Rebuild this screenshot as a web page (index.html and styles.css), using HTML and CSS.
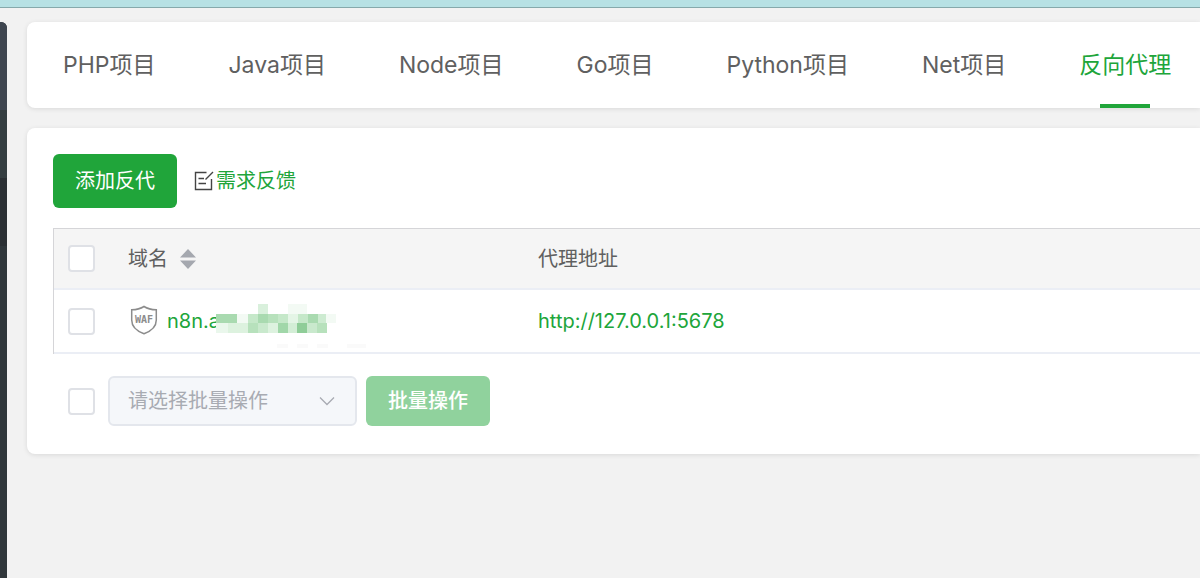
FILE: index.html
```
<!DOCTYPE html>
<html lang="zh-CN">
<head>
  <meta charset="utf-8">
  <meta name="viewport" content="width=device-width">
  <title>反向代理</title>
  <link rel="stylesheet" href="styles.css">
</head>
<body>
  <div class="topbar"></div>
  <div class="layout">
    <aside class="sidebar">
      <div class="side-logo"></div>
      <div class="side-item"></div>
      <div class="side-item active"></div>
    </aside>
    <main class="main">
      <nav class="card tabs">
        <a href="#php">PHP项目</a>
        <a href="#java">Java项目</a>
        <a href="#node">Node项目</a>
        <a href="#go">Go项目</a>
        <a href="#python">Python项目</a>
        <a href="#net">Net项目</a>
        <a href="#proxy" class="active">反向代理</a>
      </nav>

      <section class="card panel">
        <div class="toolbar">
          <button type="button" class="btn btn-add">添加反代</button>
          <a href="#feedback" class="feedback">
            <svg width="20" height="20" viewBox="0 0 20 20" fill="none" stroke="#444" stroke-width="1.4">
              <path d="M12.5 1.5H1.5V18.5H17.5V8M4.5 7.5H10M4.5 12.5H12M11.5 8.5L19 1"/>
            </svg>
            <span>需求反馈</span>
          </a>
        </div>

        <table class="sites">
          <thead>
            <tr>
              <th class="col-check"><input type="checkbox" aria-label="全选"></th>
              <th class="col-name">
                <div class="cell">
                  域名
                  <svg class="sort" width="16" height="20" viewBox="0 0 16 20" fill="#a5a8af">
                    <path d="M8 0L16 8.5H0zM8 20L0 11.5H16z"/>
                  </svg>
                </div>
              </th>
              <th>代理地址</th>
            </tr>
          </thead>
          <tbody>
            <tr>
              <td class="col-check"><input type="checkbox" aria-label="选择 n8n"></td>
              <td class="col-name">
                <div class="cell">
                  <svg class="waf" width="28" height="32" viewBox="0 0 28 32">
                    <path d="M14 1.5C10.500 3.700 6 4.700 1.700 4.800V15C1.700 21.500 6.500 26 14 28.700C21.500 26 26.300 21.500 26.300 15V4.800C22 4.700 17.500 3.700 14 1.500Z" fill="none" stroke="#8c8c8c" stroke-width="1.5"/>
                    <text x="14" y="18" text-anchor="middle" class="waf-text">WAF</text>
                  </svg>
                  <a href="#n8n" class="domain">n8n.a</a>
                  <!-- masked part of the domain -->
                  <svg class="mask" width="150" height="54" viewBox="0 -7 150 54" shape-rendering="crispEdges">
                    <path fill="#d9f0dc" d="M42 3h10v10H42z"/>
                    <path fill="#f3faf4" d="M72 3h19v10H72z"/>
                    <path fill="#a9dab0" d="M0 13h21v9H0z"/>
                    <path fill="#f3faf4" d="M21 13h11v9H21zM110 13h10v9h-10z"/>
                    <path fill="#c5e8c9" d="M32 13h10v9H32zM62 13h10v9H62zM82 13h10v9H82z"/>
                    <path fill="#a9dab0" d="M42 13h10v9H42zM92 13h10v9H92z"/>
                    <path fill="#b7e1bc" d="M52 13h10v9H52z"/>
                    <path fill="#e4f5e6" d="M72 13h10v9H72z"/>
                    <path fill="#cdebd1" d="M102 13h8v9h-8z"/>
                    <path fill="#eaf7ec" d="M0 22h12v10H0z"/>
                    <path fill="#ddf2df" d="M12 22h20v10H12zM52 22h10v10H52z"/>
                    <path fill="#b7e1bc" d="M32 22h10v10H32zM101 22h10v10h-10z"/>
                    <path fill="#c9e9cd" d="M42 22h10v10H42zM91 22h10v10H91z"/>
                    <path fill="#a1d7a9" d="M62 22h10v10H62z"/>
                    <path fill="#d3eed6" d="M72 22h9v10H72z"/>
                    <path fill="#8fcd98" d="M81 22h10v10H81z"/>
                    <path fill="#fafafa" d="M61 43h11v4H61zM81 43h11v4H81zM101 43h11v4h-11zM131 43h19v4h-19z"/>
                  </svg>
                </div>
              </td>
              <td><a href="http://127.0.0.1:5678">http://127.0.0.1:5678</a></td>
            </tr>
          </tbody>
        </table>

        <div class="batch">
          <input type="checkbox" aria-label="选择全部">
          <div class="select">
            <select disabled aria-label="批量操作">
              <option>请选择批量操作</option>
            </select>
            <svg class="arrow" width="16" height="10" viewBox="0 0 16 10" fill="none" stroke="#a8abb2" stroke-width="1.3">
              <path d="M1 1.500L8 8.500L15 1.500"/>
            </svg>
          </div>
          <button type="button" class="btn btn-batch" disabled>批量操作</button>
        </div>
      </section>
    </main>
  </div>
</body>
</html>
```

FILE: styles.css
```
* { box-sizing: border-box; }
body {
  margin: 0;
  min-height: 100vh;
  display: flex;
  flex-direction: column;
  background: #f2f2f2;
  color: #606060;
  font-family: Inter, "Noto Sans CJK SC", sans-serif;
  font-size: 20px;
  line-height: 30px;
}
a {
  color: #20a53a;
  text-decoration: none;
}
svg { flex: none; }

.topbar {
  height: 8px;
  background: #b7e1e4;
  border-bottom: 1px solid #86a9ab;
}
.layout {
  flex: 1;
  display: flex;
  gap: 20px;
  padding-top: 14px;
}
.sidebar {
  width: 7px;
  background: #30373b;
  border-radius: 0 6px 0 0;
  overflow: hidden;
}
.side-logo {
  height: 88px;
  background: #3f4650;
}
.side-item {
  height: 68px;
  background: #353e41;
}
.side-item.active { background: #2b3034; }

.main {
  flex: 1;
  min-width: 0;
}
.card {
  background: #fff;
  border-radius: 8px 0 0 8px;
  box-shadow: 0 1px 5px rgba(0, 0, 0, .1);
}

.tabs {
  display: flex;
  gap: 1px;
  height: 86px;
  margin-bottom: 20px;
  overflow: hidden;
}
.tabs a {
  position: relative;
  flex: none;
  padding: 0 36px;
  color: #606060;
  font-size: 23px;
  line-height: 86px;
}
.tabs a.active { color: #20a53a; }
.tabs a.active::after {
  content: "";
  position: absolute;
  left: 50%;
  bottom: 0;
  width: 50px;
  height: 4px;
  margin-left: -25px;
  background: #20a53a;
}

.panel { padding: 26px 0 28px 26px; }
.toolbar {
  display: flex;
  align-items: center;
  gap: 17px;
  margin-bottom: 20px;
}
.btn {
  padding: 0 22px;
  border: 0;
  border-radius: 6px;
  color: #fff;
  font: inherit;
}
.btn-add {
  height: 54px;
  background: #20a53a;
}
.btn-batch {
  height: 50px;
  background: #90d29d;
  font-weight: 500;
}
.feedback {
  display: flex;
  align-items: center;
  gap: 2px;
}

input[type=checkbox] {
  appearance: none;
  display: block;
  flex: none;
  width: 27px;
  height: 27px;
  margin: 0;
  background: #fff;
  border: 2px solid #dfe1e6;
  border-radius: 4px;
}

.sites {
  width: 100%;
  table-layout: fixed;
  border-collapse: separate;
  border-spacing: 0;
  border-top: 1px solid #d5d5d8;
  border-left: 1px solid #d5d5d8;
}
.sites th,
.sites td {
  padding: 0;
  border-bottom: 2px solid #ebeef5;
  text-align: left;
  font-weight: 400;
}
.sites th {
  height: 61px;
  background: #f5f5f5;
}
.sites td { height: 64px; }
.sites .col-check {
  width: 74px;
  padding-left: 14px;
}
.sites .col-name { width: 410px; }
.cell {
  display: flex;
  align-items: center;
}
.sort { margin-left: 12px; }
.waf {
  margin: 0 9px 0 2px;
}
.waf-text {
  fill: #8c8c8c;
  font: bold 10px "DejaVu Sans Mono", monospace;
}
.mask { margin: 0 -40px 0 -4px; }

.batch {
  display: flex;
  align-items: center;
  margin-top: 22px;
  padding-left: 15px;
}
.select {
  position: relative;
  width: 249px;
  margin: 0 9px 0 13px;
}
.select select {
  appearance: none;
  display: block;
  width: 100%;
  height: 50px;
  padding: 0 40px 0 18px;
  background: #f5f7fa;
  border: 2px solid #e4e7ed;
  border-radius: 6px;
  color: #a8abb2;
  font: inherit;
  opacity: 1;
}
.arrow {
  position: absolute;
  right: 22px;
  top: 20px;
}
```
